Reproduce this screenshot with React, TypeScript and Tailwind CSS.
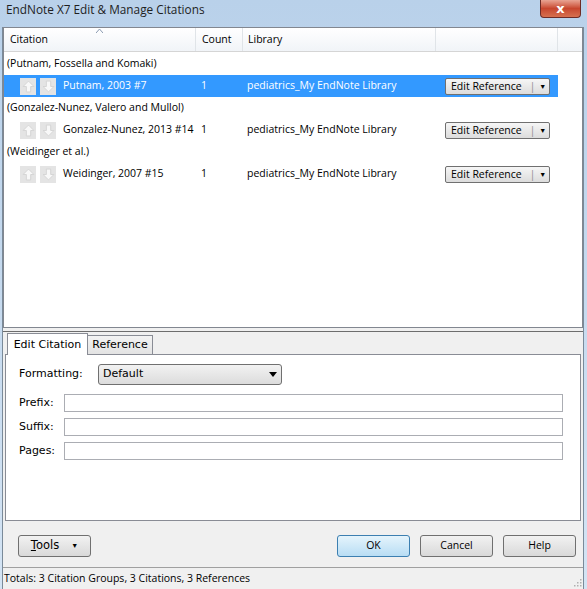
import React from "react"

type Row = { group: string; label: string; count: string; lib: string; selected?: boolean }

const ROWS: Row[] = [
  { group: "(Putnam, Fossella and Komaki)", label: "Putnam, 2003 #7", count: "1", lib: "pediatrics_My EndNote Library", selected: true },
  { group: "(Gonzalez-Nunez, Valero and Mullol)", label: "Gonzalez-Nunez, 2013 #14", count: "1", lib: "pediatrics_My EndNote Library" },
  { group: "(Weidinger et al.)", label: "Weidinger, 2007 #15", count: "1", lib: "pediatrics_My EndNote Library" },
]

const gul = { fontFamily: '"DejaVu Sans", sans-serif' }

function ArrowBox({ up }: { up?: boolean }) {
  return (
    <div className="w-[16px] h-[17px] shrink-0 bg-[#e4e4e4] flex items-center justify-center">
      <svg width="13" height="13" viewBox="0 0 12 12">
        {up ? (
          <path d="M6 1 L11 6 L8 6 L8 11 L4 11 L4 6 L1 6 Z" fill="#f8f8f8" stroke="#d2d2d2" strokeWidth="0.8" />
        ) : (
          <path d="M6 11 L11 6 L8 6 L8 1 L4 1 L4 6 L1 6 Z" fill="#f8f8f8" stroke="#d2d2d2" strokeWidth="0.8" />
        )}
      </svg>
    </div>
  )
}

function EditRefButton() {
  return (
    <div className="w-[105px] h-[17px] border border-[#707070] rounded-[2px] bg-gradient-to-b from-[#f6f6f6] to-[#dcdcdc] flex items-center text-black leading-none whitespace-nowrap">
      <span className="pl-[5px]">Edit Reference</span>
      <span className="ml-[8px] text-[#888] text-[10px]">|</span>
      <span className="ml-[4px] text-[7px]">▼</span>
    </div>
  )
}

function WinButton({ children, def }: { children: React.ReactNode; def?: boolean }) {
  return (
    <div
      className={`w-[73px] h-[22px] rounded-[3px] border flex items-center justify-center ${
        def ? "border-[#3c7fb1] bg-gradient-to-b from-[#e5f4fc] to-[#b8ddf4]" : "border-[#707070] bg-gradient-to-b from-[#f2f2f2] to-[#d9d9d9]"
      }`}
    >
      {children}
    </div>
  )
}

export default function App() {
  return (
    <div
      className="w-[587px] h-[589px] overflow-hidden flex flex-col bg-gradient-to-b from-[#b9d1ea] to-[#d4e4f4] text-black text-[10.5px]"
      style={{ fontFamily: '"Open Sans", "Noto Sans", sans-serif' }}
    >
      {/* title bar */}
      <div className="h-[27px] flex items-start shrink-0 relative">
        <div className="pl-[6px] pt-[1px] text-[11.8px] text-[#1e1e1e]">EndNote X7 Edit &amp; Manage Citations</div>
        <div className="absolute left-[540px] top-0 w-[41px] h-[18px] rounded-b-[4px] border border-t-0 border-[#6d2c26] bg-gradient-to-b from-[#e8a493] via-[#c7462e] to-[#d6704f] flex items-center justify-center">
          <span className="text-white text-[13px] font-bold leading-none" style={gul}>x</span>
        </div>
      </div>

      {/* client */}
      <div className="flex-1 flex flex-col ml-[2px] mr-[3px] bg-[#f0f0f0] border-l border-r border-[#7a8a99]">
        {/* list */}
        <div className="h-[301px] bg-white border border-[#828790] flex flex-col shrink-0">
          <div className="h-[24px] flex bg-gradient-to-b from-[#ffffff] to-[#f1f4f8] border-b border-[#d5d5d5] shrink-0">
            <div className="w-[192px] pl-[6px] pt-[1px] flex items-center border-r border-[#e0e4e8] relative">
              Citation
              <svg className="absolute left-[92px] top-[1px]" width="7" height="4" viewBox="0 0 7 4">
                <path d="M0 4 L3.5 0 L7 4" fill="none" stroke="#8a9ab0" strokeWidth="1" />
              </svg>
            </div>
            <div className="w-[47px] pl-[6px] pt-[1px] flex items-center border-r border-[#e0e4e8]">Count</div>
            <div className="w-[193px] pl-[5px] pt-[1px] flex items-center border-r border-[#e0e4e8]">Library</div>
            <div className="w-[122px] border-r border-[#e0e4e8]" />
          </div>
          <div className="flex flex-col pt-[1px]">
            {ROWS.map((r) => (
              <div key={r.label} className="flex flex-col">
                <div className="h-[22px] flex items-center pl-[3px]">{r.group}</div>
                <div className={`h-[22px] w-[554px] flex items-center ${r.selected ? "bg-[#3399ff] text-white" : ""}`}>
                  <div className="w-[192px] shrink-0 flex items-center pl-[16px] gap-[4px]">
                    <ArrowBox up />
                    <ArrowBox />
                    <span className="ml-[3px] whitespace-nowrap">{r.label}</span>
                  </div>
                  <div className="w-[47px] shrink-0 pl-[5px]">{r.count}</div>
                  <div className="w-[193px] shrink-0 pl-[4px] whitespace-nowrap">{r.lib}</div>
                  <div className="pl-[9px] shrink-0">
                    <EditRefButton />
                  </div>
                </div>
              </div>
            ))}
          </div>
        </div>

        {/* splitter */}
        <div className="h-[3px] shrink-0" />
        <div className="h-[1px] bg-[#6d6d6d] shrink-0" />

        {/* tabs */}
        <div className="flex items-end h-[22px] pl-[4px] shrink-0" style={gul}>
          <div className="h-[22px] w-[81px] bg-white border border-b-0 border-[#898c95] flex items-center justify-center relative top-[1px] z-10">
            <span className="text-[11px] pt-[1px]">Edit Citation</span>
          </div>
          <div className="h-[19px] w-[65px] bg-gradient-to-b from-[#f3f3f3] to-[#e3e3e3] border border-b-0 border-l-0 border-[#898c95] flex items-center justify-center">
            <span className="text-[11px] pt-[1px]">Reference</span>
          </div>
        </div>
        <div className="h-[167px] mx-[2px] bg-white border border-[#898c95] flex flex-col shrink-0 text-[11px]" style={gul}>
          <div className="flex items-center mt-[9px] pl-[13px]">
            <span className="w-[79px]">Formatting:</span>
            <div className="w-[184px] h-[21px] rounded-[3px] border border-[#707070] bg-gradient-to-b from-[#f2f2f2] to-[#dcdcdc] flex items-center justify-between px-[4px]">
              <span>Default</span>
              <svg width="8" height="5" viewBox="0 0 8 5"><path d="M0 0 L8 0 L4 5 Z" fill="#000" /></svg>
            </div>
          </div>
          {["Prefix:", "Suffix:", "Pages:"].map((l, i) => (
            <div key={l} className={`flex items-center pl-[13px] ${i === 0 ? "mt-[9px]" : "mt-[6px]"}`}>
              <span className="w-[45px]">{l}</span>
              <div className="w-[499px] h-[18px] border border-[#abadb3]" />
            </div>
          ))}
        </div>

        {/* buttons */}
        <div className="flex items-center h-[46px] shrink-0 pl-[15px] pr-[7px] pt-[4px]">
          <WinButton>
            <span className="flex items-center gap-[12px]">
              <span className="text-[11.5px]" style={gul}><u>T</u>ools</span>
              <span className="text-[7px]">▼</span>
            </span>
          </WinButton>
          <div className="flex-1" />
          <div className="flex gap-[10px]">
            <WinButton def>OK</WinButton>
            <WinButton>Cancel</WinButton>
            <WinButton>Help</WinButton>
          </div>
        </div>

        {/* status */}
        <div className="flex-1 border-t border-[#a0a0a0] flex items-center pl-[1px] relative">
          Totals: 3 Citation Groups, 3 Citations, 3 References
          <svg className="absolute right-[1px] bottom-[2px]" width="10" height="10" viewBox="0 0 10 10">
            {[
              [8, 2], [8, 5], [5, 5], [8, 8], [5, 8], [2, 8],
            ].map(([x, y]) => (
              <rect key={`${x}-${y}`} x={x} y={y} width="1.5" height="1.5" fill="#b0b0b0" />
            ))}
          </svg>
        </div>
      </div>
    </div>
  )
}
